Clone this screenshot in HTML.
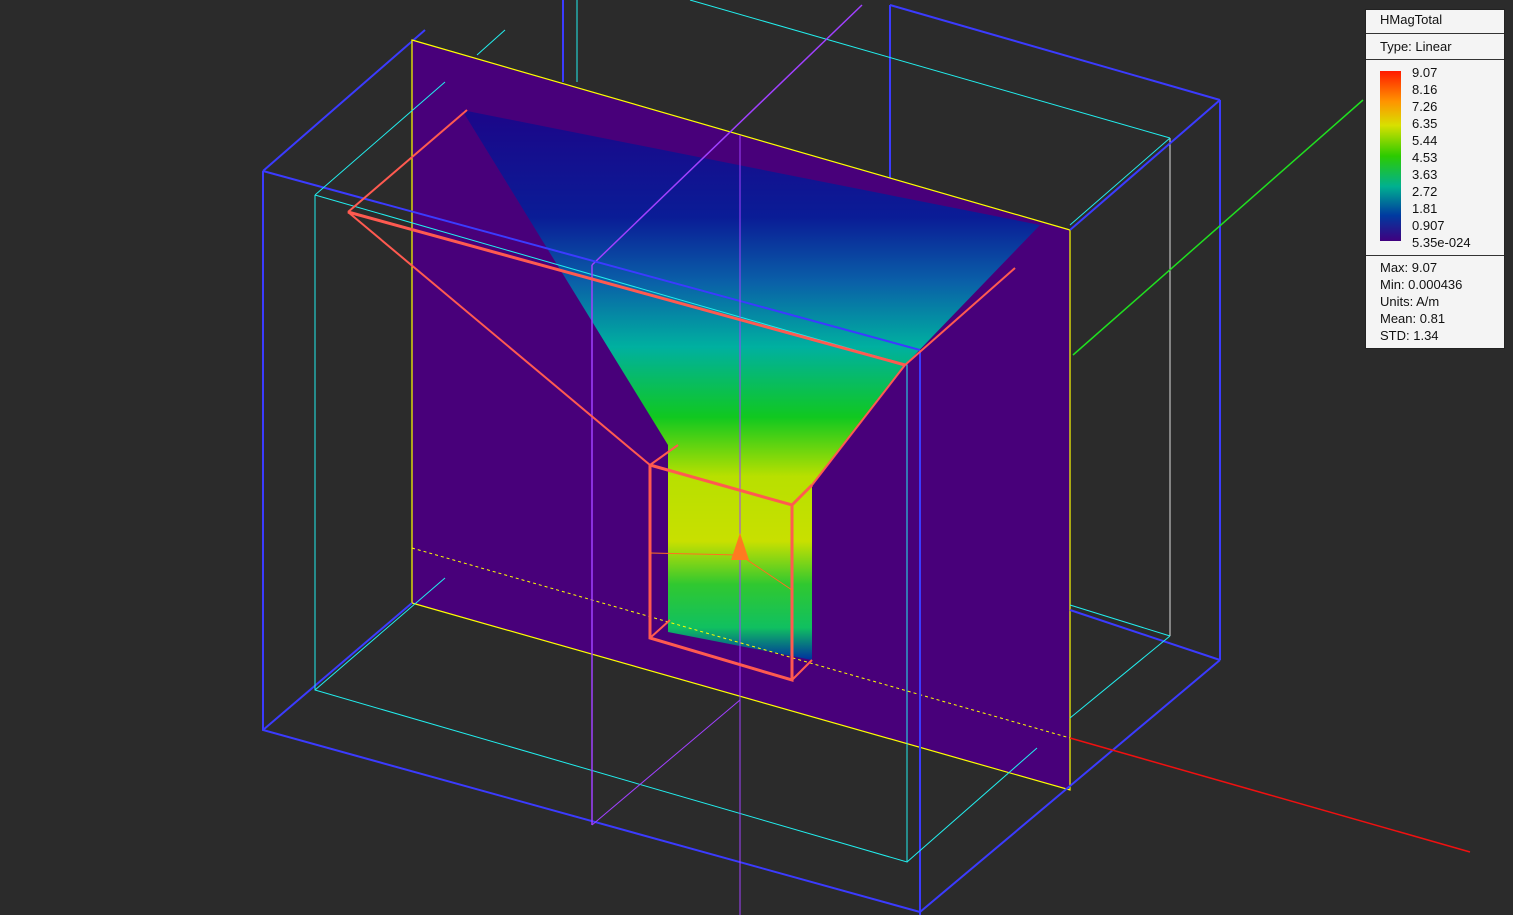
<!DOCTYPE html>
<html><head><meta charset="utf-8"><style>
html,body{margin:0;padding:0;background:#2b2b2b;width:1513px;height:915px;overflow:hidden}
#lg{position:absolute;left:1365px;top:9px;width:138px;height:338px;background:#f4f4f4;border:1px solid #222;font-family:"Liberation Sans",sans-serif;font-size:13px;color:#111}
#lg div{position:absolute;left:14px}
.hr{position:absolute;left:0!important;width:138px;height:1px;background:#333}
.cb{top:61px;width:21px;height:170px;background:linear-gradient(#ff1a00,#ff9400 18%,#d8e000 32%,#2ccb00 50%,#00b090 68%,#003aa0 85%,#40007f)}
</style></head><body>
<svg width="1513" height="915" style="position:absolute;left:0;top:0">
<defs>
<linearGradient id="fld" gradientUnits="userSpaceOnUse" x1="0" y1="120" x2="0" y2="660"><stop offset="0" stop-color="#1a088a"/><stop offset="0.18" stop-color="#0a1c96"/><stop offset="0.3" stop-color="#0a60a8"/><stop offset="0.42" stop-color="#00b0a0"/><stop offset="0.55" stop-color="#10c820"/><stop offset="0.66" stop-color="#b8e000"/><stop offset="0.78" stop-color="#c8e000"/><stop offset="0.86" stop-color="#30c830"/><stop offset="0.94" stop-color="#10c060"/><stop offset="1" stop-color="#0030a0"/></linearGradient>
</defs>
<g fill="none">
<line x1="563" y1="0" x2="563" y2="82" stroke="#3b3bff" stroke-width="2"/>
<line x1="577" y1="0" x2="577" y2="82" stroke="#2ee" stroke-width="1"/>
<line x1="890" y1="5" x2="890" y2="230" stroke="#3b3bff" stroke-width="2"/>
<line x1="890" y1="5" x2="1220" y2="100" stroke="#3b3bff" stroke-width="2"/>
<line x1="690" y1="0" x2="1170" y2="138" stroke="#2ee"/>
<line x1="1220" y1="100" x2="1220" y2="660" stroke="#3b3bff" stroke-width="2"/>
<line x1="1170" y1="138" x2="1170" y2="636" stroke="#ddd"/>
<line x1="263" y1="171" x2="425" y2="30" stroke="#3b3bff" stroke-width="2"/>
<line x1="477" y1="55" x2="505" y2="30" stroke="#2ee"/>
<line x1="1363" y1="100" x2="1073" y2="355" stroke="#20e020" stroke-width="1.5"/>
<polygon points="412,40 1070,230 1070,790 412,603" fill="#48007a"/>
<polygon points="462,110 1040,225 905,365 812,485 812,660 668,632 668,445" fill="url(#fld)"/>
<polygon points="412,40 1070,230 1070,790 412,603" stroke="#ff0" stroke-width="1.2"/>
<line x1="412" y1="548" x2="1070" y2="738" stroke="#ff0" stroke-dasharray="3,3"/>
<line x1="862" y1="5" x2="592" y2="265" stroke="#a040ff" stroke-width="1.5"/>
<polyline points="263,171 263,730 920,912" stroke="#3b3bff" stroke-width="2"/>
<line x1="263" y1="171" x2="920" y2="350" stroke="#3b3bff" stroke-width="2"/>
<line x1="920" y1="350" x2="920" y2="915" stroke="#3b3bff" stroke-width="2"/>
<line x1="1220" y1="660" x2="920" y2="912" stroke="#3b3bff" stroke-width="2"/>
<line x1="263" y1="730" x2="412" y2="603" stroke="#3b3bff" stroke-width="2"/>
<line x1="1070" y1="610" x2="1220" y2="660" stroke="#3b3bff" stroke-width="2"/>
<line x1="1070" y1="230" x2="1220" y2="100" stroke="#3b3bff" stroke-width="2"/>
<polyline points="315,195 315,690 907,862 907,365 315,195" stroke="#2ee"/>
<line x1="315" y1="195" x2="445" y2="82" stroke="#2ee"/>
<line x1="315" y1="690" x2="445" y2="578" stroke="#2ee"/>
<line x1="1070" y1="225" x2="1170" y2="138" stroke="#2ee"/>
<line x1="907" y1="862" x2="1037" y2="748" stroke="#2ee"/>
<line x1="1070" y1="605" x2="1170" y2="636" stroke="#2ee"/>
<line x1="1070" y1="718" x2="1170" y2="636" stroke="#2ee"/>
<line x1="592" y1="265" x2="592" y2="825" stroke="#a040ff" stroke-width="1.5"/>
<line x1="592" y1="825" x2="740" y2="700" stroke="#a040ff"/>
<line x1="740" y1="135" x2="740" y2="915" stroke="#a040ff"/>
<line x1="1070" y1="738" x2="1470" y2="852" stroke="#f01010" stroke-width="1.5"/>
<g stroke="#ff5a50" stroke-width="2">
<line x1="348" y1="212" x2="467" y2="110"/>
<line x1="348" y1="212" x2="905" y2="365" stroke-width="3"/>
<line x1="348" y1="212" x2="650" y2="465"/>
<line x1="905" y1="365" x2="1015" y2="268"/>
<line x1="905" y1="365" x2="812" y2="485"/>
<line x1="650" y1="465" x2="678" y2="445"/>
<polyline points="650,465 792,505 812,485" stroke-width="3"/>
<polyline points="650,465 650,638 792,680 792,505" stroke-width="3"/>
<line x1="792" y1="680" x2="812" y2="660"/>
<line x1="650" y1="638" x2="670" y2="620"/>
</g>
<polyline points="650,553 740,555 792,590" stroke="#ff7020"/>
<polygon points="740,533 731,560 749,560" fill="#ff7a20"/>
</g>
</svg>
<div id="lg">
<div style="top:2px">HMagTotal</div>
<div class="hr" style="top:23px"></div>
<div style="top:29px">Type: Linear</div>
<div class="hr" style="top:49px"></div>
<div class="cb"></div>
<div style="left:46px;top:54px;line-height:17px">9.07<br>8.16<br>7.26<br>6.35<br>5.44<br>4.53<br>3.63<br>2.72<br>1.81<br>0.907<br>5.35e-024</div>
<div class="hr" style="top:245px"></div>
<div style="top:249px;line-height:17px">Max: 9.07<br>Min: 0.000436<br>Units: A/m<br>Mean: 0.81<br>STD: 1.34</div>
</div>
</body></html>
